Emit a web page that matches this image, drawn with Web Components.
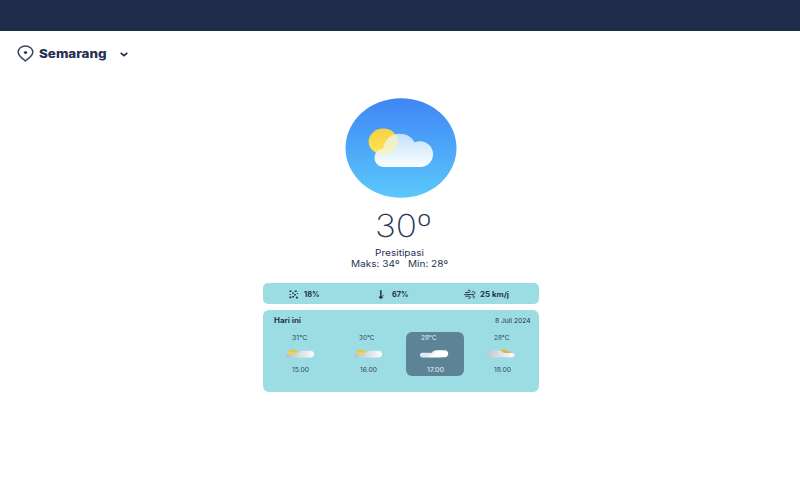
<!DOCTYPE html>
<html lang="id">
<head>
<meta charset="utf-8">
<title>Cuaca Semarang</title>
<style>
html,body{margin:0;background:#fff}
body{width:800px;height:500px;overflow:hidden;font-family:Inter,"Liberation Sans",sans-serif;color:#24304f}
</style>
</head>
<body>
<weather-app></weather-app>
<script>
/* One line of text stretched to the width given in "w". */
class FitText extends HTMLElement {
  connectedCallback() {
    const g = n => this.getAttribute(n);
    const root = this.attachShadow({mode: 'open'});
    root.innerHTML = `<style>
      :host{display:block;flex:none;width:${g('w')}px;height:${g('h') || 10}px;line-height:${g('h') || 10}px;
        font-size:${g('size')}px;font-weight:${g('weight') || 400};white-space:pre}
      span{display:inline-block;transform-origin:0 50%}
      </style><span><slot></slot></span>`;
    const s = root.querySelector('span');
    s.style.transform = `scaleX(${g('w') / s.getBoundingClientRect().width})`;
  }
}
customElements.define('fit-text', FitText);

const icons = {
  pin: `<svg width="17" height="17" viewBox="0 0 17 17" fill="none" stroke="#3c465f" stroke-width="1.5"><path d="M8.400 16C7.100 14.200 1.200 11.500 1.200 7.300 1.200 3.700 4.300 1 8.400 1s7.400 2.700 7.400 6.300C15.800 11.500 9.700 14.200 8.400 16Z" stroke-linejoin="round"/><ellipse cx="8.500" cy="7.600" rx="1.700" ry="1.400" fill="#24304f" stroke="none"/></svg>`,
  chevron: `<svg width="8" height="5" viewBox="0 0 8 5" fill="none" stroke="#24304f" stroke-width="1.700"><path d="M.7.8 4 3.700 7.300.8"/></svg>`,
  hero: `<svg width="112" height="100" viewBox="0 0 112 100"><defs>
    <linearGradient id="a" x2="0" y2="1"><stop stop-color="#3f86f5"/><stop offset="1" stop-color="#5bc8fb"/></linearGradient>
    <linearGradient id="s" x2="0" y2="1"><stop stop-color="#fbd045"/><stop offset="1" stop-color="#fde556"/></linearGradient>
    <linearGradient id="c" x2="0" y2="1"><stop stop-color="#bfe0fb"/><stop offset=".5" stop-color="#def0fd"/><stop offset="1" stop-color="#fbfeff"/></linearGradient>
    <clipPath id="k"><path d="M39 69c-5.600 0-9.500-4.300-9.500-9.300 0-4.900 3.800-8.700 8.800-9C39.600 41.700 46.200 35.800 54.500 35.800c6.900 0 12.600 3.300 14.700 8.400 9.900-3.600 18.900 3 18.900 11.800C88.100 63.400 82.500 69 75.500 69Z"/></clipPath></defs>
    <ellipse cx="56" cy="50" rx="55.500" ry="49.800" fill="url(#a)"/>
    <ellipse cx="38.300" cy="43.500" rx="14.700" ry="12.900" fill="url(#s)"/>
    <g clip-path="url(#k)"><rect x="29" y="35" width="60" height="34.500" fill="url(#c)"/><ellipse cx="38.300" cy="43.500" rx="14.700" ry="12.900" fill="#fff3ae" opacity=".7"/></g></svg>`,
  rain: `<svg width="10" height="9" viewBox="0 0 10 9" fill="#24304f"><path d="M.5.5h2v1.500h-2zM5.700.5h2v1.500h-2zM3.200 2.200h1.600v1.500H3.200zM.6 3.900h1.300v1.100H.6zM5 3.900h1.800v1.500H5zM.4 6.600h2v1.700h-2zM3.300 5.900h1.700v1.600H3.300zM6.900 6.700h2v1.700h-2zM7.900 2.900h1v1h-1z"/></svg>`,
  thermo: `<svg width="6" height="9" viewBox="0 0 6 9" fill="#24304f"><rect x="1.100" y=".1" width="1.500" height="7" rx=".6"/><ellipse cx="1.900" cy="7.300" rx="1.900" ry="1.400"/><ellipse cx="4.400" cy="5.500" rx=".7" ry=".8" opacity=".6"/></svg>`,
  wind: `<svg width="12" height="10" viewBox="0 0 12 10" fill="none" stroke="#24304f" stroke-width=".9" stroke-linecap="round"><path d="M1.500 3.500H5c1.300 0 1.500-2.500 0-2.500-.6 0-1 .2-1.100.5M.6 5.500h8.800c1.900 0 2-3 0-3-.8 0-1.300.3-1.400.8M8.500 7h1c1.500 0 1.500 2.100 0 2.100M1.500 7.200h3.800c1.500 0 1.500 2.300 0 2.300-.5 0-.9-.2-1-.4"/></svg>`,
  sun: `<svg width="30" height="12" viewBox="0 0 30 12"><defs><linearGradient id="g"><stop stop-color="#b9bdc8"/><stop offset=".5" stop-color="#dcdee5"/><stop offset="1" stop-color="#fbfcfd"/></linearGradient><linearGradient id="y" x2="0" y2="1"><stop stop-color="#efb91f"/><stop offset="1" stop-color="#f5dc55"/></linearGradient></defs>
    <path d="M3.300 9.500C1.800 9.500 1 8.700 1 7.400 1 6 2 5.100 4 5c1.500-1 5-1.200 8-.3C14 2.900 16 2.700 19 2.700h6.500c2.300 0 3.500 1.300 3.500 3.300 0 2.200-1.200 3.500-3.500 3.500Z" fill="url(#g)"/><path d="M2.700 5.200C3.300 3.100 5 2 7.800 2c3 0 4.900.9 5.600 2.400-1 .7-2.300 1-3.600.8-1.700.9-4.300.8-7.100 0Z" fill="url(#y)"/></svg>`,
  cloud: `<svg width="30" height="12" viewBox="0 0 30 12"><defs><linearGradient id="g" x2="1" y2=".3"><stop stop-color="#f2f8fb"/><stop offset=".4" stop-color="#d8e6ee"/><stop offset=".65" stop-color="#fff"/></linearGradient></defs><path d="M3.500 9.500C2 9.500 1 8.600 1 7.100 1 5.600 2 4.700 3.500 4.700h7c1 0 1.700.2 2.300.2C13.500 3.200 15 2.200 17.500 2.200h8C28 2.200 29.200 3.600 29.200 5.600c0 2.200-1.200 3.600-3.700 3.700-2 .2-6 .2-9 .2Z" fill="url(#g)"/></svg>`,
  sunRight: `<svg width="30" height="12" viewBox="0 0 30 12"><defs><linearGradient id="g"><stop stop-color="#c4c4cc"/><stop offset=".5" stop-color="#dfe2e8"/><stop offset="1" stop-color="#fff"/></linearGradient></defs><path d="M15 1.500l2.600.6 1.200-.5 1 1 2.500.9 3.200-.1-1.200.8 1.600.9-7 1.300-3.200-2Z" fill="#e9b127"/><path d="M4 9.300C2 9.300 1 8 1 6 1 3.900 2.200 2.800 4.500 2.800H13c2 0 3.700.5 4.500 1.900 1 .2 1.700.2 2.500.2h5.500c2 0 3 .8 3 2.200 0 1.400-1 2.200-3 2.200Z" fill="url(#g)"/></svg>`
};
class WeatherIcon extends HTMLElement {
  connectedCallback() {
    this.attachShadow({mode: 'open'}).innerHTML =
      `<style>:host,svg{display:block;flex:none}</style>${icons[this.getAttribute('name')]}`;
  }
}
customElements.define('weather-icon', WeatherIcon);

class StatItem extends HTMLElement {
  connectedCallback() {
    this.attachShadow({mode: 'open'}).innerHTML = `<style>
      :host{display:flex;align-items:center;gap:${this.getAttribute('gap')}px}
      weather-icon{margin-top:-1px}</style>
      <weather-icon name="${this.getAttribute('icon')}"></weather-icon><slot></slot>`;
  }
}
customElements.define('stat-item', StatItem);

class HourCard extends HTMLElement {
  connectedCallback() {
    const g = n => this.getAttribute(n);
    this.attachShadow({mode: 'open'}).innerHTML = `<style>
      :host{display:grid;flex:none;box-sizing:border-box;width:57.500px;height:44px;border-radius:6px;padding-top:1px;
        grid-template-rows:10px 22px 10px;align-items:center;justify-items:start;color:#33445f}
      :host([active]){background:#5c8496;color:#e8f0f3}
      .t{margin-left:${g('tx')}px}.i{margin-left:${g('ix')}px}.h{margin-left:${g('hx')}px}
      </style>
      <fit-text class="t" w="15.500" size="6.500">${g('temp')}</fit-text>
      <weather-icon class="i" name="${g('icon')}"></weather-icon>
      <fit-text class="h" w="17" size="6.500">${g('hour')}</fit-text>`;
  }
}
customElements.define('hour-card', HourCard);

class WeatherApp extends HTMLElement {
  connectedCallback() {
    this.attachShadow({mode: 'open'}).innerHTML = `<style>
      :host{display:block;width:800px;height:500px}
      header{height:31px;background:#1e2c4a}
      nav{display:flex;align-items:center;height:45px;padding-left:17px}
      nav fit-text{margin:0 13.500px 0 5px}
      nav weather-icon:last-child{margin-top:1px}
      main{display:flex;flex-direction:column;align-items:center;width:276px;margin-left:263px;padding-top:21.500px}
      .deg{margin:13px 0 0 3.500px;color:#2b3856}
      .p{margin:6.500px 0 0 -3px}.m{margin:-1.500px 0 0 -3px}
      .p,.m{color:#2a3552}
      .stats{display:flex;align-items:center;box-sizing:border-box;width:276.500px;height:21px;margin-top:13.500px;
        padding:2px 0 0 26.500px;border-radius:5px;background:#9cdde4}
      stat-item:nth-child(2){margin-left:60px}stat-item:nth-child(3){margin-left:55.500px}
      .panel{box-sizing:border-box;width:276.500px;height:82px;margin-top:5.500px;border-radius:6px;background:#9cdde4;padding:6px 9px 0 11px}
      .head{display:flex;justify-content:space-between;height:16px}
      .hours{display:flex;gap:9.800px;margin-left:-2.300px}
      </style>
      <header></header>
      <nav><weather-icon name="pin"></weather-icon><fit-text w="67.500" h="16" size="11.800" weight="850">Semarang</fit-text><weather-icon name="chevron"></weather-icon></nav>
      <main>
        <weather-icon name="hero"></weather-icon>
        <fit-text class="deg" w="56.500" h="30" size="32" weight="150">30º</fit-text>
        <fit-text class="p" w="49" h="12" size="9">Presitipasi</fit-text>
        <fit-text class="m" w="97" h="12" size="9">Maks: 34º   Min: 28º</fit-text>
        <section class="stats">
          <stat-item icon="rain" gap="4.500"><fit-text w="15.500" size="7" weight="700">18%</fit-text></stat-item>
          <stat-item icon="thermo" gap="7"><fit-text w="16.500" size="7" weight="700">67%</fit-text></stat-item>
          <stat-item icon="wind" gap="3.500"><fit-text w="29" size="7" weight="700">25 km/j</fit-text></stat-item>
        </section>
        <section class="panel">
          <div class="head"><fit-text w="27" size="7" weight="700">Hari ini</fit-text><fit-text w="35.500" size="6.500">8 Juli 2024</fit-text></div>
          <div class="hours">
            <hour-card temp="31°C" icon="sun" hour="15.00" tx="20.300" ix="13.500" hx="20.800"></hour-card>
            <hour-card temp="30°C" icon="sun" hour="16.00" tx="20.300" ix="14" hx="21"></hour-card>
            <hour-card active temp="28°C" icon="cloud" hour="17.00" tx="14.500" ix="13" hx="20.500"></hour-card>
            <hour-card temp="28°C" icon="sunRight" hour="18.00" tx="20.500" ix="12.500" hx="20.500"></hour-card>
          </div>
        </section>
      </main>`;
  }
}
customElements.define('weather-app', WeatherApp);
</script>
</body>
</html>
